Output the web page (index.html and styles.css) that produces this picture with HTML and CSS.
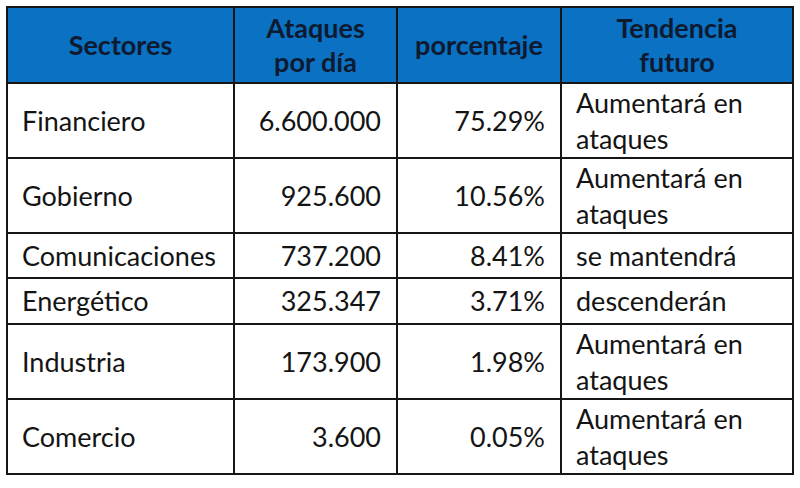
FILE: index.html
```html
<!DOCTYPE html>
<html lang="es">
<head>
<meta charset="utf-8">
<link rel="stylesheet" href="styles.css">
</head>
<body>
<table class="data">
  <colgroup>
    <col class="c1"><col class="c2"><col class="c3"><col class="c4">
  </colgroup>
  <thead>
    <tr class="r-head">
      <th>Sectores</th>
      <th>Ataques<br>por día</th>
      <th>porcentaje</th>
      <th>Tendencia<br>futuro</th>
    </tr>
  </thead>
  <tbody>
    <tr class="r-tall">
      <td>Financiero</td><td class="num">6.600.000</td><td class="num">75.29%</td><td>Aumentará en<br>ataques</td>
    </tr>
    <tr class="r-tall">
      <td>Gobierno</td><td class="num">925.600</td><td class="num">10.56%</td><td>Aumentará en<br>ataques</td>
    </tr>
    <tr class="r-short">
      <td>Comunicaciones</td><td class="num">737.200</td><td class="num">8.41%</td><td>se mantendrá</td>
    </tr>
    <tr class="r-short2">
      <td>Energético</td><td class="num">325.347</td><td class="num">3.71%</td><td>descenderán</td>
    </tr>
    <tr class="r-tall">
      <td>Industria</td><td class="num">173.900</td><td class="num">1.98%</td><td>Aumentará en<br>ataques</td>
    </tr>
    <tr class="r-tall">
      <td>Comercio</td><td class="num">3.600</td><td class="num">0.05%</td><td>Aumentará en<br>ataques</td>
    </tr>
  </tbody>
</table>
</body>
</html>
```
FILE: styles.css
```css
html, body {
  margin: 0;
  padding: 0;
  background: #ffffff;
}
body {
  padding: 6px 0 0 6px;
  font-family: Lato, "Open Sans", "DejaVu Sans", sans-serif;
  color: #141414;
}
.data {
  border-collapse: collapse;
  table-layout: fixed;
  width: 786px;
  font-size: 27px;
  line-height: 36px;
}
.c1 { width: 227px; }
.c2 { width: 163px; }
.c3 { width: 164px; }
.c4 { width: 232px; }
.data th,
.data td {
  border: 2px solid #161616;
  padding: 0 14px;
  vertical-align: middle;
  text-align: left;
  white-space: nowrap;
}
.data th {
  background: #0a71c3;
  color: #0e1a30;
  font-weight: 700;
  text-align: center;
  line-height: 34px;
}
.data td.num {
  text-align: right;
  padding-right: 15px;
}
.r-head { height: 76px; }
.r-tall { height: 75px; }
.r-short { height: 45px; }
.r-short2 { height: 46px; }
```
